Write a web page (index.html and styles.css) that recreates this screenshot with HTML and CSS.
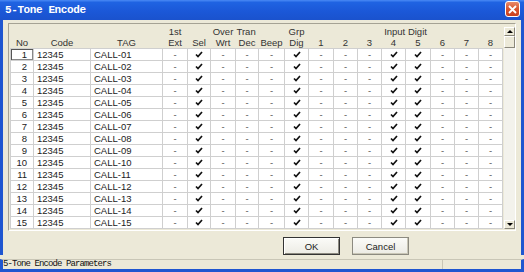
FILE: index.html
```html
<!DOCTYPE html>
<html lang="en">
<head>
    <meta charset="UTF-8">
    <title>5-Tone Encode</title>
    <link rel="stylesheet" href="styles.css">
</head>
<body>
    <div class="window">
        <div class="titlebar">
            <span class="title">5-Tone Encode</span>
            <div class="close">
                <svg width="9" height="9" viewBox="0 0 9 9"><path d="M1 1 L8 8 M8 1 L1 8" stroke="#fff" stroke-width="1.8"/></svg>
            </div>
        </div>
        <div class="body">
            <div class="frame">
                <table class="grid" id="grid">
                    <colgroup>
                        <col style="width:23px"><col style="width:57px"><col style="width:72px">
                        <col style="width:25px"><col style="width:23px"><col style="width:25px"><col style="width:23px">
                        <col style="width:26px"><col style="width:24px"><col style="width:25px"><col style="width:24px">
                        <col style="width:24px"><col style="width:24px"><col style="width:25px"><col style="width:24px">
                        <col style="width:24px"><col style="width:24px">
                    </colgroup>
                    <thead>
                        <tr>
                            <th></th><th></th><th></th>
                            <th>1st</th><th></th><th>Over</th>
                            <th colspan="2" class="tran">Tran</th>
                            <th>Grp</th>
                            <th colspan="8">Input Digit</th>
                        </tr>
                        <tr>
                            <th>No</th><th>Code</th><th>TAG</th>
                            <th>Ext</th><th>Sel</th><th>Wrt</th><th>Dec</th><th>Beep</th><th>Dig</th>
                            <th>1</th><th>2</th><th>3</th><th>4</th><th>5</th><th>6</th><th>7</th><th>8</th>
                        </tr>
                    </thead>
                    <tbody id="rows"></tbody>
                </table>
                <div class="scrollbar">
                    <div class="sb-btn"><span class="arrow-up"></span></div>
                    <div class="sb-thumb"></div>
                    <div class="sb-track"></div>
                    <div class="sb-btn"><span class="arrow-down"></span></div>
                </div>
            </div>
            <div class="buttons">
                <button class="btn default">OK</button>
                <button class="btn">Cancel</button>
            </div>
        </div>
        <div class="statusbar">
            <span class="status-text">5-Tone Encode Parameters</span>
            <span class="status-pane"></span>
        </div>
    </div>

    <script>
        const rows = document.getElementById("rows");
        const checkSvg = '<svg width="8" height="7" viewBox="0 0 8 7"><path d="M1 3.5 L3 5.5 L7 1" fill="none" stroke="#111" stroke-width="1.7"/></svg>';
        // columns after TAG: Ext Sel Wrt Dec Beep Dig 1..8
        const checked = [false, true, false, false, false, true, false, false, false, true, true, false, false, false];

        for (let i = 1; i <= 15; i++) {
            let tr = document.createElement("tr");
            let html = `<td class="no${i === 1 ? ' focus' : ''}">${i}</td>`;
            html += `<td class="txt">12345</td>`;
            html += `<td class="txt">CALL-${String(i).padStart(2, "0")}</td>`;
            checked.forEach(c => {
                html += c ? `<td class="flag">${checkSvg}</td>` : `<td class="flag dash">-</td>`;
            });
            tr.innerHTML = html;
            rows.appendChild(tr);
        }
    </script>
</body>
</html>
```

FILE: styles.css
```css
body {
    margin: 0;
    background: #ece9d8;
}
.window {
    width: 524px;
    height: 272px;
    display: flex;
    flex-direction: column;
    background: #ece9d8;
    font-family: "Liberation Sans", Arial, sans-serif;
    overflow: hidden;
}
.titlebar {
    height: 20px;
    flex: none;
    display: flex;
    align-items: center;
    justify-content: space-between;
    padding: 0 4px 0 5px;
    background: linear-gradient(to bottom, #4a8af5 0%, #1f63e2 12%, #1b58d8 55%, #1a52cd 100%);
}
.title {
    color: #fff;
    font-family: "Liberation Mono", monospace;
    font-weight: bold;
    font-size: 11px;
    letter-spacing: -0.4px;
}
.close {
    width: 15px;
    height: 16px;
    margin-top: -2px;
    box-sizing: border-box;
    border: 1px solid #fff;
    border-radius: 3px;
    background: linear-gradient(to bottom, #e98a6a, #d9552e 50%, #c8401e);
    display: flex;
    align-items: center;
    justify-content: center;
}
.body {
    flex: 1;
    display: flex;
    flex-direction: column;
    padding: 3px 5px 0 5px;
    border-left: 3px solid #1f56d0;
    border-right: 3px solid #1f56d0;
}
.frame {
    height: 208px;
    box-sizing: border-box;
    display: flex;
    padding-left: 1px;
    border: 1px solid;
    border-color: #a5a294 #fff #fff #a5a294;
    flex: none;
}
.grid {
    width: 492px;
    table-layout: fixed;
    border-collapse: collapse;
    font-size: 9.5px;
    color: #222;
    align-self: flex-start;
}
.grid th {
    font-weight: normal;
    height: 11px;
    padding: 0;
    line-height: 11px;
    text-align: center;
    color: #333;
}
.grid thead tr:first-child th {
    padding-top: 2px;
}
.grid th.tran {
    text-align: left;
    padding-left: 1px;
}
.grid td {
    background: #fff;
    border: 1px solid #cfcfcf;
    height: 11px;
    padding: 0;
    line-height: 10px;
    white-space: nowrap;
    overflow: hidden;
}
.grid td.no {
    text-align: right;
    padding-right: 6px;
}
.grid td.focus {
    box-shadow: inset 1px 1px 0 #555, inset -1px -1px 0 #888;
}
.grid td.txt {
    padding-left: 3px;
}
.grid td.flag {
    text-align: center;
}
.grid td.flag svg {
    vertical-align: middle;
}
.grid td.dash {
    color: #555;
}
.scrollbar {
    width: 12px;
    margin-left: 1px;
    display: flex;
    flex-direction: column;
    padding: 3px 0 1px;
    background: #ece9d8;
}
.sb-btn, .sb-thumb {
    height: 9px;
    box-sizing: border-box;
    border: 1px solid;
    border-color: #fff #8a877b #8a877b #fff;
    background: #ece9d8;
    display: flex;
    align-items: center;
    justify-content: center;
}
.sb-thumb {
    height: 12px;
}
.sb-track {
    flex: 1;
    background: #f3f2ec;
}
.arrow-up {
    border-left: 3px solid transparent;
    border-right: 3px solid transparent;
    border-bottom: 3px solid #000;
}
.arrow-down {
    border-left: 3px solid transparent;
    border-right: 3px solid transparent;
    border-top: 3px solid #000;
}
.buttons {
    display: flex;
    gap: 12px;
    margin: 6px 0 0 275px;
}
.btn {
    width: 57px;
    height: 18px;
    padding: 0;
    font-family: "Liberation Sans", Arial, sans-serif;
    font-size: 9.5px;
    color: #222;
    background: linear-gradient(to bottom, #fbfbf8, #ecebe4);
    border: 1px solid #8c8a80;
    box-shadow: inset -1px -1px 0 #c9c6b6;
}
.btn.default {
    border-color: #333;
    box-shadow: inset 1px 1px 0 #fff, inset -1px -1px 0 #8c8a80;
}
.statusbar {
    height: 13px;
    flex: none;
    display: flex;
    align-items: flex-start;
    box-sizing: border-box;
    border-top: 1px solid #c9c6b6;
    border-left: 3px solid #1f56d0;
    border-right: 3px solid #1f56d0;
    border-bottom: 3px solid #1f56d0;
    margin-top: 4px;
}
.status-text {
    width: 439px;
    font-family: "Liberation Mono", monospace;
    font-size: 9px;
    letter-spacing: -0.9px;
    line-height: 9px;
    color: #111;
    padding-left: 0;
    border-right: 1px solid #c9c6b6;
    height: 9px;
}
.status-pane {
    flex: 1;
}
```
